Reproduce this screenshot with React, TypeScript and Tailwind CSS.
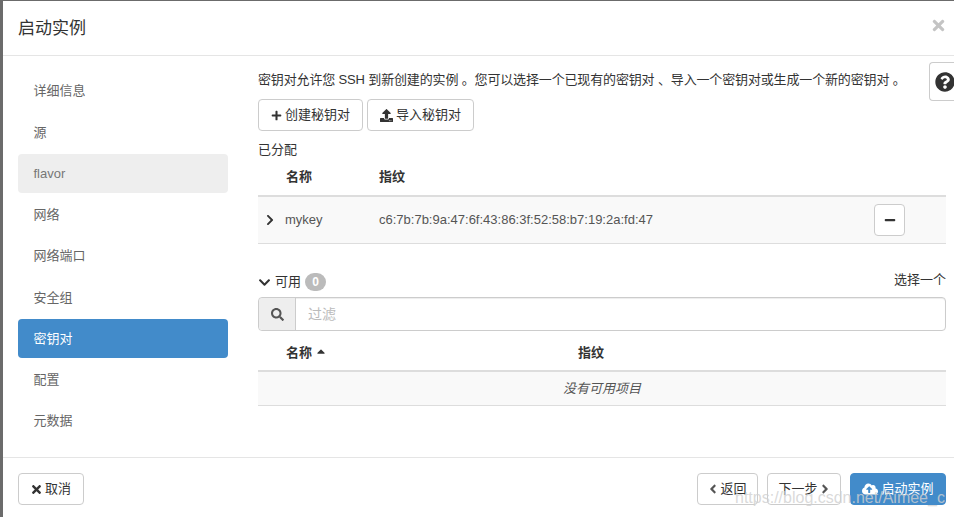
import { FaTimes, FaPlus, FaUpload, FaChevronRight, FaChevronDown, FaSearch, FaMinus, FaCloudUploadAlt, FaAngleLeft, FaAngleRight, FaSortUp, FaQuestionCircle } from "react-icons/fa";

const steps = ["详细信息", "源", "flavor", "网络", "网络端口", "安全组", "密钥对", "配置", "元数据"];

function Btn({ className = "", children }: { className?: string; children: React.ReactNode }) {
  return (
    <button className={`h-[32px] flex items-center justify-center rounded-[4px] border border-[#ccc] bg-white text-[13px] text-[#333] ${className}`}>
      {children}
    </button>
  );
}

export default function App() {
  return (
    <div className="w-[954px] h-[517px] overflow-hidden relative bg-[#6b6b6b] pl-[3px] pt-px font-['Liberation_Sans','Noto_Sans_CJK_SC',sans-serif] text-[13px] text-[#333]">
      <div className="h-[516px] bg-white flex flex-col">
        {/* header */}
        <div className="h-[55px] shrink-0 border-b border-[#e5e5e5] pl-[15px] pr-[8px] flex items-center justify-between">
          <h4 className="text-[17px] leading-none mt-[1px]">启动实例</h4>
          <FaTimes className="w-[15px] h-[17px] text-[#c4c4c4] mb-[6px]" />
        </div>

        {/* body */}
        <div className="h-[401px] shrink-0 flex relative">
          <ul className="w-[210px] ml-[15px] mt-[15.5px] shrink-0">
            {steps.map((s, i) => (
              <li
                key={s}
                className={`h-[39.25px] mb-[2px] px-[15.5px] flex items-center rounded-[4px] ${
                  i === 6 ? "bg-[#428bca] text-white" : i === 2 ? "bg-[#eeeeee] text-[#777]" : "text-[#666]"
                }`}
              >
                {s}
              </li>
            ))}
          </ul>

          <div className="w-[688px] ml-[30px] shrink-0">
            <p className="mt-[14px] h-[19px] leading-[19px] whitespace-nowrap text-[#333] tracking-[-0.15px]">
              密钥对允许您 SSH 到新创建的实例 。您可以选择一个已现有的密钥对 、导入一个密钥对或生成一个新的密钥对 。
            </p>
            <div className="flex gap-[4px] mt-[10px]">
              <Btn className="w-[105px] gap-[3px]">
                <FaPlus className="w-[11px] h-[11px]" />
                创建秘钥对
              </Btn>
              <Btn className="w-[107px] gap-[3px]">
                <FaUpload className="w-[13px] h-[13px]" />
                导入秘钥对
              </Btn>
            </div>
            <div className="mt-[9px] h-[19px] leading-[19px]">已分配</div>

            <div className="h-[32px] mt-[4px] pb-[4px] flex items-center font-bold">
              <span className="ml-[28px] w-[93px]">名称</span>
              <span>指纹</span>
            </div>
            <div className="h-[49px] border-t-2 border-b border-t-[#dddddd] border-b-[#dddddd] bg-[#f9f9f9] flex items-center">
              <FaChevronRight className="w-[12px] h-[12px] ml-[6px] text-[#333]" />
              <span className="ml-[9px] w-[94px] text-[#555]">mykey</span>
              <span className="text-[#555]">c6:7b:7b:9a:47:6f:43:86:3f:52:58:b7:19:2a:fd:47</span>
              <Btn className="absolute left-[871px] w-[31px] h-[30px]">
                <FaMinus className="w-[12px] h-[12px]" />
              </Btn>
            </div>

            <div className="flex justify-between mt-[25px] h-[26px]">
              <div className="flex items-center gap-[4px] h-[26px]">
                <FaChevronDown className="w-[13px] h-[13px]" />
                <span>可用</span>
                <span className="w-[21px] h-[18px] rounded-full bg-[#bbbbbb] text-white text-[12px] font-bold flex items-center justify-center">0</span>
              </div>
              <span className="leading-[22px]">选择一个</span>
            </div>

            <div className="h-[34px] mt-[2px] flex border border-[#cccccc] rounded-[4px] shadow-[inset_0_1px_1px_rgba(0,0,0,0.075)]">
              <div className="w-[37px] bg-[#eeeeee] border-r border-[#cccccc] rounded-l-[4px] flex items-center justify-center">
                <FaSearch className="w-[13px] h-[13px] text-[#555]" />
              </div>
              <div className="pl-[12px] flex items-center text-[#bbb] text-[14px]">过滤</div>
            </div>

            <div className="h-[39px] pt-[4px] flex items-center font-bold">
              <span className="ml-[28px] flex items-center gap-[4px] w-[292px]">
                名称
                <FaSortUp className="w-[10px] h-[13px] mt-[3px]" />
              </span>
              <span>指纹</span>
            </div>
            <div className="h-[36px] border-t-2 border-b border-t-[#dddddd] border-b-[#dddddd] bg-[#f9f9f9] flex items-center justify-center italic text-[#555]">
              没有可用项目
            </div>
          </div>

          {/* help tab */}
          <div className="absolute right-0 top-[6px] w-[25px] h-[39px] bg-white border border-r-0 border-[#cccccc] rounded-l-[4px] flex items-center pl-[5px] overflow-hidden">
            <FaQuestionCircle className="w-[20px] h-[20px] shrink-0 text-[#333]" />
          </div>
        </div>

        {/* footer */}
        <div className="flex-1 border-t border-[#e5e5e5] pl-[15px] pr-[8px] pt-[15px] flex justify-between">
          <Btn className="w-[66px] gap-[3px]">
            <FaTimes className="w-[11px] h-[13px]" />
            取消
          </Btn>
          <div className="flex gap-[9px]">
            <Btn className="w-[61px] gap-[2px]">
              <FaAngleLeft className="w-[10px] h-[14px] text-[#555]" />
              返回
            </Btn>
            <Btn className="w-[74px] gap-[2px]">
              下一步
              <FaAngleRight className="w-[10px] h-[14px] text-[#555]" />
            </Btn>
            <Btn className="w-[96px] gap-[3px] !bg-[#428bca] !border-[#428bca] !text-white">
              <FaCloudUploadAlt className="w-[16px] h-[16px]" />
              启动实例
            </Btn>
          </div>
        </div>
      </div>

      {/* watermark */}
      <div className="absolute left-[735px] top-[487px] text-[16px] leading-[22px] text-[#d0d0d0]/80 whitespace-nowrap pointer-events-none">
        https://blog.csdn.net/Aimee_c
      </div>
    </div>
  );
}
